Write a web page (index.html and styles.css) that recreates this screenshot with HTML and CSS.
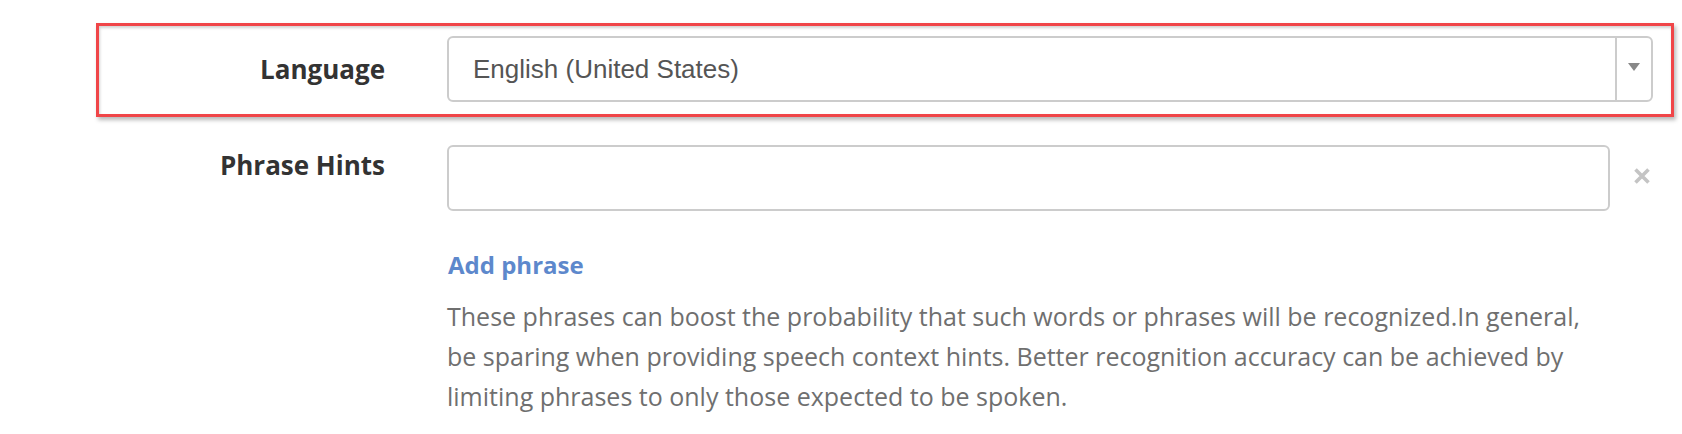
FILE: index.html
```html
<!DOCTYPE html>
<html lang="en">
<head>
<meta charset="utf-8">
<title>Speech settings</title>
<link rel="stylesheet" href="styles.css">
</head>
<body>
<form class="form">
  <div class="form-row highlight">
    <label class="label label-center">Language</label>
    <div class="control">
      <div class="select">
        <span class="select-value">English (United States)</span>
        <span class="select-arrow"><span class="triangle"></span></span>
      </div>
    </div>
  </div>
  <div class="form-row hints">
    <label class="label label-top">Phrase Hints</label>
    <div class="control">
      <div class="input-group">
        <div class="input"></div>
        <span class="remove">
          <svg width="18" height="18" viewBox="0 0 18 18"><path d="M2.5 2.5 L15.5 15.5 M15.5 2.5 L2.5 15.5" stroke="#c4c4c4" stroke-width="3.6" fill="none"/></svg>
        </span>
      </div>
      <a class="add-link">Add phrase</a>
      <p class="help">These phrases can boost the probability that such words or phrases will be recognized.In general, be sparing when providing speech context hints. Better recognition accuracy can be achieved by limiting phrases to only those expected to be spoken.</p>
    </div>
  </div>
</form>
</body>
</html>
```
FILE: styles.css
```css
html, body {
  margin: 0;
  padding: 0;
  background: #ffffff;
}
body {
  font-family: "Open Sans", "Liberation Sans", sans-serif;
}
.form {
  padding-top: 23px;
}
.form-row {
  margin-left: 96px;
  width: 1578px;
  box-sizing: border-box;
  border: 3px solid transparent;
  display: grid;
  grid-template-columns: 287px 1206px;
  column-gap: 61px;
}
.highlight {
  border-color: #f04548;
  padding: 10px 0 12px;
  box-shadow: 2px 3px 4px rgba(0, 0, 0, 0.28), inset 1px 2px 3px rgba(0, 0, 0, 0.18);
}
.hints {
  margin-top: 25px;
  padding-top: 0;
}
.label {
  font-weight: 700;
  font-size: 26px;
  color: #333333;
  text-align: right;
  padding-right: 1px;
}
.label-center {
  align-self: center;
  margin-top: -1px;
}
.label-top {
  padding-top: 2px;
}
.control {
  display: flex;
  flex-direction: column;
}
.select {
  height: 66px;
  box-sizing: border-box;
  border: 2px solid #cccccc;
  border-radius: 6px;
  display: flex;
  align-items: center;
}
.select-value {
  flex: 1;
  padding-left: 24px;
  font-family: "Liberation Sans", Arial, sans-serif;
  font-size: 26px;
  color: #555555;
}
.select-arrow {
  align-self: stretch;
  width: 34px;
  border-left: 2px solid #cccccc;
  display: flex;
  align-items: center;
  justify-content: center;
}
.triangle {
  width: 0;
  height: 0;
  border-left: 6px solid transparent;
  border-right: 6px solid transparent;
  border-top: 8px solid #888888;
  margin-top: -4px;
}
.input-group {
  display: flex;
  align-items: center;
}
.input {
  flex: 1;
  height: 66px;
  box-sizing: border-box;
  border: 2px solid #cccccc;
  border-radius: 6px;
}
.remove {
  width: 18px;
  height: 18px;
  margin-left: 23px;
  margin-right: 2px;
  margin-bottom: 4px;
  display: flex;
}
.add-link {
  margin-top: 37px;
  margin-left: 1px;
  font-weight: 700;
  font-size: 24px;
  color: #5d88cc;
  cursor: pointer;
}
.help {
  margin: 15px 43px 0 0;
  font-size: 25px;
  line-height: 40px;
  color: #6f6f6f;
}
```
